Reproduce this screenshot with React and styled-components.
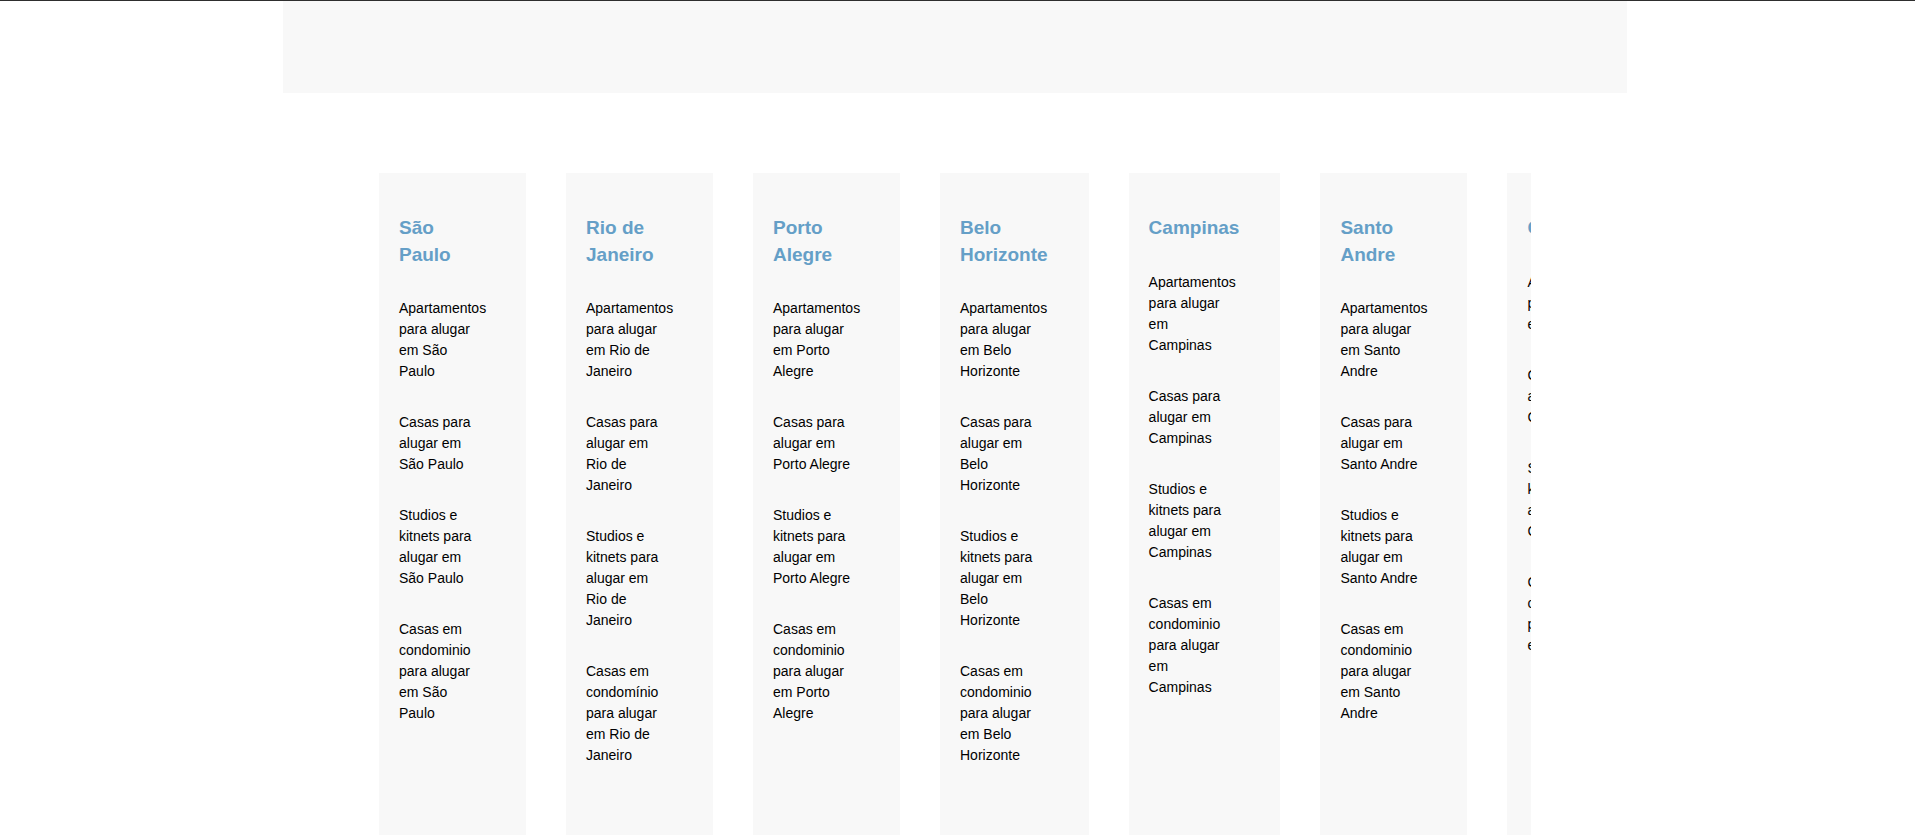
import React from 'react'
import styled, { createGlobalStyle } from 'styled-components'

const colors = {
  panel: '#f8f8f8',
  rule: '#2e2e2e',
  heading: '#659fc7',
  text: '#000000',
}

const GlobalStyle = createGlobalStyle`
  html, body {
    margin: 0;
    padding: 0;
    background: #ffffff;
    overflow: hidden;
  }
  body {
    font-family: "Liberation Sans", Arial, sans-serif;
  }
`

// Layout

const Page = styled.div`
  border-top: 1px solid ${colors.rule};
  width: 100%;
`

const Inner = styled.div`
  width: 1910px;
`

const Banner = styled.header`
  width: 1344px;
  height: 92px;
  margin: 0 auto;
  background: ${colors.panel};
`

// the city list is a slider, the last card is cut by the viewport
const Carousel = styled.section`
  width: 1152px;
  margin: 80px auto 0;
  overflow: hidden;
`

const Track = styled.div`
  display: flex;
  align-items: stretch;
  gap: 40px;
`

const Column = styled.div`
  flex: none;
  width: min-content;
  display: flex;
  flex-direction: column;
  gap: 30px;
  padding: 22px 41px 120px 20px;
  background: ${colors.panel};
`

const City = styled.h3`
  margin: 20px 0 0;
  font-size: 19px;
  line-height: 26.5px;
  font-weight: 700;
  color: ${colors.heading};
`

const Item = styled.a`
  display: block;
  max-width: 86px;
  font-size: 14px;
  line-height: 21px;
  color: ${colors.text};
  text-decoration: none;
`

// Data

const cities = [
  { name: 'São Paulo' },
  { name: 'Rio de Janeiro', accent: true },
  { name: 'Porto Alegre' },
  { name: 'Belo Horizonte' },
  { name: 'Campinas' },
  { name: 'Santo Andre' },
  { name: 'Curitiba' },
]

const linksFor = ({ name, accent }) => [
  `Apartamentos para alugar em ${name}`,
  `Casas para alugar em ${name}`,
  `Studios e kitnets para alugar em ${name}`,
  `Casas em ${accent ? 'condomínio' : 'condominio'} para alugar em ${name}`,
]

// JSX

const App = () => (
  <>
    <GlobalStyle />
    <Page>
      <Inner>
        <Banner />
        <Carousel>
          <Track>
            {cities.map(city => (
              <Column key={city.name}>
                <City>{city.name}</City>
                {linksFor(city).map(label => (
                  <Item key={label} href="#">{label}</Item>
                ))}
              </Column>
            ))}
          </Track>
        </Carousel>
      </Inner>
    </Page>
  </>
)

export default App
